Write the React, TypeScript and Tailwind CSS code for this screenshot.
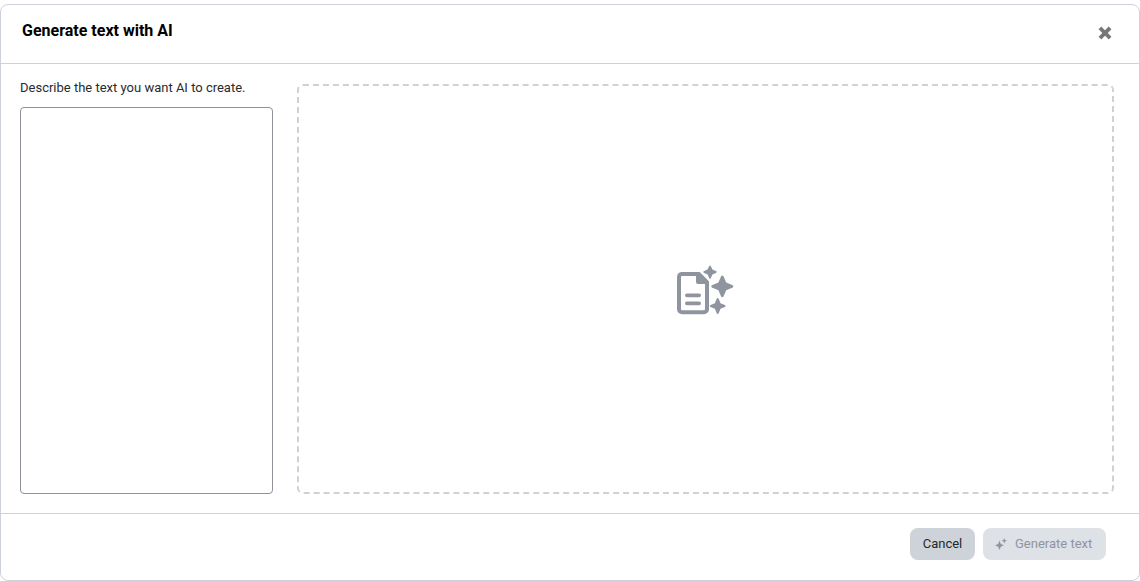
type IconProps = { className?: string };

function CloseIcon({ className }: IconProps) {
  return (
    <svg className={className} viewBox="0 0 14 14" fill="none" stroke="currentColor" aria-hidden="true">
      <path strokeLinecap="square" strokeWidth={3.8} d="M3.3 3.3l7.4 7.4M10.7 3.3l-7.4 7.4" />
    </svg>
  );
}

function DocumentSparklesIcon({ className }: IconProps) {
  return (
    <svg className={className} viewBox="0 0 57 50" fill="currentColor" aria-hidden="true">
      {/* Page */}
      <path
        fill="none"
        stroke="currentColor"
        strokeWidth={4}
        strokeLinejoin="round"
        d="M21.5 8.9H5a3 3 0 0 0-3 3v32.4a3 3 0 0 0 3 3h22a3 3 0 0 0 3-3V17.4z"
      />
      <path d="M19 7h3.5L32 16.5V19H21a2 2 0 0 1-2-2z" />
      <path
        fill="none"
        stroke="currentColor"
        strokeWidth={3.8}
        strokeLinecap="round"
        d="M9.9 30.3h12.2M9.9 38.3h12.2"
      />
      {/* Sparkles */}
      <path d="M33 0.4q.6 0 .9.8l1.5 3.4 3.5 1.5q.8.4.8 1t-.8 1l-3.5 1.5-1.5 3.5q-.3.8-.9.8t-.9-.8l-1.5-3.5-3.5-1.5q-.8-.4-.8-1t.8-1l3.5-1.5 1.5-3.4q.3-.8.9-.8z" />
      <path d="M45.3 10.5q.9 0 1.3 1l2.6 6 6 2.6q1.1.5 1.1 1.3t-1.1 1.3l-6 2.6-2.6 6q-.4 1-1.3 1t-1.3-1l-2.6-6-6-2.6q-1.1-.5-1.1-1.3t1.1-1.3l6-2.6 2.6-6q.4-1 1.3-1z" />
      <path d="M40.7 33q.7 0 1 .8l1.8 4.4 4.3 1.8q.9.4.9 1t-.9 1l-4.3 1.8-1.8 4.4q-.3.8-1 .8t-1-.8l-1.8-4.4-4.3-1.8q-.9-.4-.9-1t.9-1l4.3-1.8 1.8-4.4q.3-.8 1-.8z" />
    </svg>
  );
}

function SparklesIcon({ className }: IconProps) {
  return (
    <svg className={className} viewBox="0 0 12 12" fill="currentColor" aria-hidden="true">
      <path d="M4.5 2.6l1.3 3.3L9 7.3 5.8 8.7 4.5 12 3.2 8.7 0 7.3l3.2-1.4z" />
      <path d="M9.3 0l.7 2 2 .8-2 .8-.7 2-.8-2-1.9-.8 1.9-.8z" />
    </svg>
  );
}

export default function App() {
  return (
    <div className="flex min-h-screen flex-col bg-white pt-1 font-[Roboto,sans-serif]">
      <div
        role="dialog"
        aria-labelledby="dialog-title"
        className="flex flex-1 flex-col rounded-lg border border-[#cdd1db] bg-white"
      >
        {/* Header */}
        <header className="flex items-start justify-between border-b border-[#cdd1db] pt-4 pr-[22px] pb-[18px] pl-[21px]">
          <h1 id="dialog-title" className="text-base leading-5 font-bold text-black">
            Generate text with AI
          </h1>
          <button type="button" aria-label="Close" className="flex size-6 items-center justify-center text-[#777777]">
            <CloseIcon className="size-3.5" />
          </button>
        </header>

        {/* Prompt and preview */}
        <main className="flex flex-1 gap-6 pt-4 pr-[25px] pb-[19px] pl-[19px]">
          <div className="flex w-[253px] shrink-0 flex-col gap-[11px]">
            <label htmlFor="prompt" className="text-[13px] leading-4 text-[#282b30]">
              Describe the text you want AI to create.
            </label>
            <textarea
              id="prompt"
              className="w-full flex-1 resize-none rounded border border-[#8e929b] bg-white p-2 text-[13px] outline-none"
            />
          </div>
          <div className="mt-1 flex min-w-0 flex-1 items-center justify-center rounded-md border-2 border-dashed border-[#cdd1d8] pt-0.5">
            <DocumentSparklesIcon className="h-[50px] w-[57px] text-[#8f959f]" />
          </div>
        </main>

        {/* Footer */}
        <footer className="flex justify-end gap-2 border-t border-[#cdd1d8] pt-3.5 pr-[33px] pb-5">
          <button type="button" className="h-8 w-[65px] rounded-lg bg-[#ced3d9] text-[13px] text-[#24272b]">
            Cancel
          </button>
          <button
            type="button"
            disabled
            className="flex h-8 w-[123px] items-center gap-2 rounded-lg bg-[#dee1e6] px-3 text-[13px] text-[#8f949f]"
          >
            <SparklesIcon className="size-3" />
            Generate text
          </button>
        </footer>
      </div>
    </div>
  );
}
